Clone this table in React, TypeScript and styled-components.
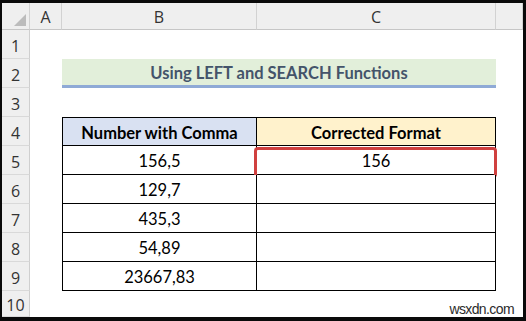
import React from "react"
import styled, { createGlobalStyle, css } from "styled-components"

const GlobalStyle = createGlobalStyle`
  html, body {
    margin: 0;
    padding: 0;
    background: #000;
  }
  * {
    box-sizing: border-box;
  }
`

const SFrame = styled.div`
  width: 526px;
  height: 321px;
  padding: 3px 3px 4px 2px;
  background-color: #0a0a0a;
  overflow: hidden;
`

const SSheet = styled.div`
  width: 100%;
  height: 100%;
  display: grid;
  grid-template-columns: 28px 32px 195px 239px 1fr;
  grid-template-rows: 27px repeat(9, 29px) 1fr;
  background-color: #ffffff;
  font-family: Lato, "Open Sans", sans-serif;
  color: #000;
`

const SHeadBase = css`
  background-color: #efefef;
  color: #333333;
  font-family: "Open Sans", "Noto Sans", sans-serif;
  font-size: 16px;
  display: flex;
  align-items: center;
  justify-content: center;
`

const SCorner = styled.div`
  ${SHeadBase};
  position: relative;
  border-right: 1px solid #d2d2d2;
  border-bottom: 1px solid #c6c6c6;

  svg {
    position: absolute;
    right: 3px;
    bottom: 3px;
  }
`

const SColHead = styled.div`
  ${SHeadBase};
  border-right: 1px solid #d2d2d2;
  border-bottom: 1px solid #c6c6c6;
  padding-top: 2px;
`

const SRowHead = styled.div`
  ${SHeadBase};
  border-right: 1px solid #cfcfcf;
  border-bottom: 1px solid #d9d9d9;
  padding-top: 3px;
`

const SBlank = styled.div<{ $span?: number }>`
  grid-column: span ${({ $span }) => $span ?? 1};
`

const STitle = styled.div`
  grid-column: span 2;
  background-color: #e2efda;
  border-bottom: 3px solid #8faad6;
  color: #44546a;
  font-weight: 700;
  font-size: 16.5px;
  display: flex;
  align-items: center;
  justify-content: center;
  padding-top: 2px;
`

const SCell = styled.div<{ $bg?: string; $first?: boolean; $top?: boolean; $bold?: boolean }>`
  position: relative;
  display: flex;
  align-items: center;
  justify-content: center;
  font-size: 16.5px;
  font-weight: ${({ $bold }) => ($bold ? 700 : 400)};
  background-color: ${({ $bg }) => $bg ?? "#ffffff"};
  border-right: 1px solid #000;
  border-bottom: 1px solid #000;
  border-left: ${({ $first }) => ($first ? "1px solid #000" : "none")};
  border-top: ${({ $top }) => ($top ? "1px solid #000" : "none")};
  padding-top: 2px;
`

const SHighlight = styled.div`
  position: absolute;
  left: -3px;
  top: 1px;
  width: 243px;
  height: 31px;
  border: 3px solid #d0403f;
  border-radius: 4px;
  pointer-events: none;
`

const SWatermark = styled.div`
  grid-column: span 2;
  display: flex;
  align-items: flex-end;
  justify-content: flex-end;
  padding: 0 9px 0 0;
  font-family: "Liberation Sans", Arial, sans-serif;
  font-size: 14px;
  letter-spacing: -0.6px;
  color: #2a2a2a;
`

const rows = [
  { value: "156,5", result: "156" },
  { value: "129,7", result: "" },
  { value: "435,3", result: "" },
  { value: "54,89", result: "" },
  { value: "23667,83", result: "" },
]

const App = () => {
  return (
    <>
      <GlobalStyle />
      <SFrame>
        <SSheet>
          <SCorner>
            <svg width="12" height="12" viewBox="0 0 12 12">
              <polygon points="12,0 12,12 0,12" fill="#bcbcbc" />
            </svg>
          </SCorner>
          <SColHead>A</SColHead>
          <SColHead>B</SColHead>
          <SColHead>C</SColHead>
          <SColHead />

          <SRowHead>1</SRowHead>
          <SBlank $span={4} />

          <SRowHead>2</SRowHead>
          <SBlank />
          <STitle>Using LEFT and SEARCH Functions</STitle>
          <SBlank />

          <SRowHead>3</SRowHead>
          <SBlank $span={4} />

          <SRowHead>4</SRowHead>
          <SBlank />
          <SCell $first $top $bold $bg="#d9e1f2">Number with Comma</SCell>
          <SCell $top $bold $bg="#fff2cc">Corrected Format</SCell>
          <SBlank />

          {rows.map((row, i) => (
            <React.Fragment key={row.value}>
              <SRowHead>{i + 5}</SRowHead>
              <SBlank />
              <SCell $first>{row.value}</SCell>
              <SCell>
                {row.result}
                {i === 0 && <SHighlight />}
              </SCell>
              <SBlank />
            </React.Fragment>
          ))}

          <SRowHead>10</SRowHead>
          <SBlank $span={2} />
          <SWatermark>wsxdn.com</SWatermark>
        </SSheet>
      </SFrame>
    </>
  )
}

export default App
